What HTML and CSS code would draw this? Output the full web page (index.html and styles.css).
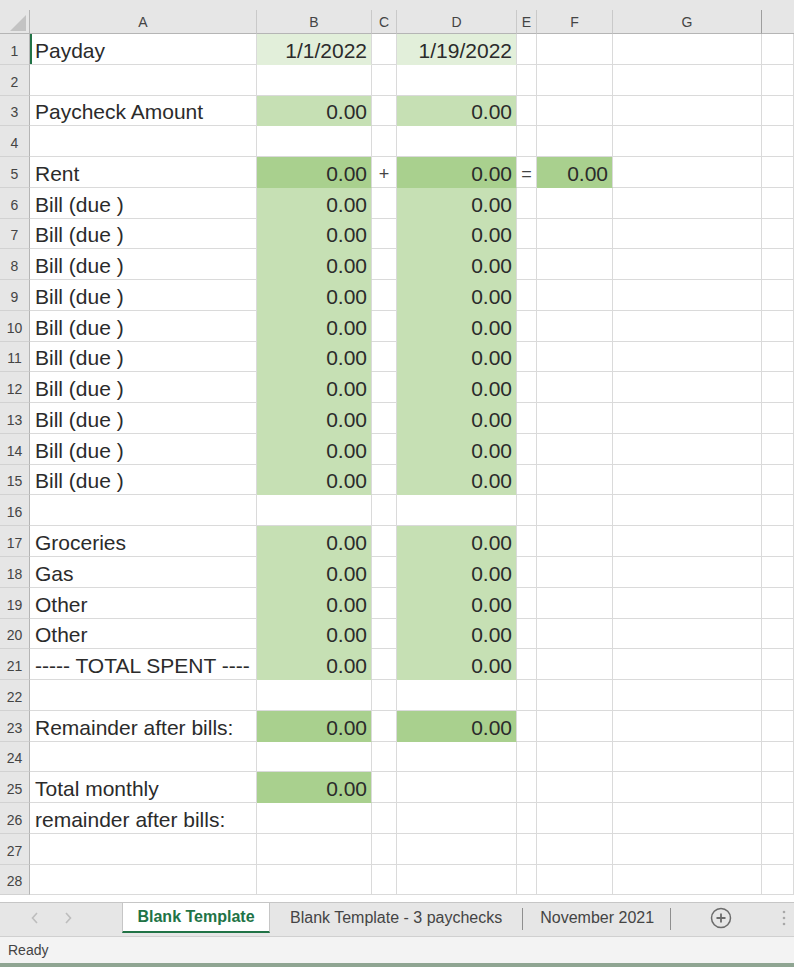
FILE: index.html
```html
<!DOCTYPE html>
<html lang="en">
<head>
  <meta charset="UTF-8" />
  <meta name="viewport" content="width=device-width, initial-scale=1.0"/>
  <title>Budget - Blank Template</title>
  <link rel="stylesheet" href="styles.css">
</head>
<body>
  <div class="sheet">
    <div class="top-strip"></div>
    <table class="grid">
      <colgroup>
        <col class="col-hd"><col class="col-a"><col class="col-b"><col class="col-c"><col class="col-d">
        <col class="col-e"><col class="col-f"><col class="col-g"><col class="col-h">
      </colgroup>
      <thead>
        <tr>
          <th class="corner">
            <svg width="16" height="16" viewBox="0 0 16 16"><polygon points="0,16 16,16 16,0" fill="#c3c3c3"/></svg>
          </th>
          <th>A</th><th>B</th><th>C</th><th>D</th><th>E</th><th>F</th><th class="last">G</th><th></th>
        </tr>
      </thead>
      <tbody>
        <tr class="active-row"><th>1</th><td class="active">Payday</td><td class="num pale">1/1/2022</td><td></td><td class="num pale">1/19/2022</td><td></td><td></td><td></td><td></td></tr>
        <tr><th>2</th><td></td><td></td><td></td><td></td><td></td><td></td><td></td><td></td></tr>
        <tr><th>3</th><td>Paycheck Amount</td><td class="num light">0.00</td><td></td><td class="num light">0.00</td><td></td><td></td><td></td><td></td></tr>
        <tr><th>4</th><td></td><td></td><td></td><td></td><td></td><td></td><td></td><td></td></tr>
        <tr><th>5</th><td>Rent</td><td class="num dark">0.00</td><td class="op">+</td><td class="num dark">0.00</td><td class="op">=</td><td class="num dark">0.00</td><td></td><td></td></tr>
        <tr><th>6</th><td>Bill (due )</td><td class="num light">0.00</td><td></td><td class="num light">0.00</td><td></td><td></td><td></td><td></td></tr>
        <tr><th>7</th><td>Bill (due )</td><td class="num light">0.00</td><td></td><td class="num light">0.00</td><td></td><td></td><td></td><td></td></tr>
        <tr><th>8</th><td>Bill (due )</td><td class="num light">0.00</td><td></td><td class="num light">0.00</td><td></td><td></td><td></td><td></td></tr>
        <tr><th>9</th><td>Bill (due )</td><td class="num light">0.00</td><td></td><td class="num light">0.00</td><td></td><td></td><td></td><td></td></tr>
        <tr><th>10</th><td>Bill (due )</td><td class="num light">0.00</td><td></td><td class="num light">0.00</td><td></td><td></td><td></td><td></td></tr>
        <tr><th>11</th><td>Bill (due )</td><td class="num light">0.00</td><td></td><td class="num light">0.00</td><td></td><td></td><td></td><td></td></tr>
        <tr><th>12</th><td>Bill (due )</td><td class="num light">0.00</td><td></td><td class="num light">0.00</td><td></td><td></td><td></td><td></td></tr>
        <tr><th>13</th><td>Bill (due )</td><td class="num light">0.00</td><td></td><td class="num light">0.00</td><td></td><td></td><td></td><td></td></tr>
        <tr><th>14</th><td>Bill (due )</td><td class="num light">0.00</td><td></td><td class="num light">0.00</td><td></td><td></td><td></td><td></td></tr>
        <tr><th>15</th><td>Bill (due )</td><td class="num light">0.00</td><td></td><td class="num light">0.00</td><td></td><td></td><td></td><td></td></tr>
        <tr><th>16</th><td></td><td></td><td></td><td></td><td></td><td></td><td></td><td></td></tr>
        <tr><th>17</th><td>Groceries</td><td class="num light">0.00</td><td></td><td class="num light">0.00</td><td></td><td></td><td></td><td></td></tr>
        <tr><th>18</th><td>Gas</td><td class="num light">0.00</td><td></td><td class="num light">0.00</td><td></td><td></td><td></td><td></td></tr>
        <tr><th>19</th><td>Other</td><td class="num light">0.00</td><td></td><td class="num light">0.00</td><td></td><td></td><td></td><td></td></tr>
        <tr><th>20</th><td>Other</td><td class="num light">0.00</td><td></td><td class="num light">0.00</td><td></td><td></td><td></td><td></td></tr>
        <tr><th>21</th><td>----- TOTAL SPENT ----</td><td class="num light">0.00</td><td></td><td class="num light">0.00</td><td></td><td></td><td></td><td></td></tr>
        <tr><th>22</th><td></td><td></td><td></td><td></td><td></td><td></td><td></td><td></td></tr>
        <tr><th>23</th><td>Remainder after bills:</td><td class="num dark">0.00</td><td></td><td class="num dark">0.00</td><td></td><td></td><td></td><td></td></tr>
        <tr><th>24</th><td></td><td></td><td></td><td></td><td></td><td></td><td></td><td></td></tr>
        <tr><th>25</th><td>Total monthly</td><td class="num dark">0.00</td><td></td><td></td><td></td><td></td><td></td><td></td></tr>
        <tr><th>26</th><td>remainder after bills:</td><td></td><td></td><td></td><td></td><td></td><td></td><td></td></tr>
        <tr><th>27</th><td></td><td></td><td></td><td></td><td></td><td></td><td></td><td></td></tr>
        <tr><th>28</th><td></td><td></td><td></td><td></td><td></td><td></td><td></td><td></td></tr>
      </tbody>
    </table>
  </div>

  <div class="tabs">
    <div class="tab-nav">
      <svg width="8" height="12" viewBox="0 0 8 12"><path d="M6 1 L1.5 6 L6 11" fill="none" stroke="#bdbdbd" stroke-width="1.6"/></svg>
      <svg width="8" height="12" viewBox="0 0 8 12"><path d="M2 1 L6.5 6 L2 11" fill="none" stroke="#bdbdbd" stroke-width="1.6"/></svg>
    </div>
    <div class="tab current">Blank Template</div>
    <div class="tab tab-wide">Blank Template - 3 paychecks</div>
    <div class="sep"></div>
    <div class="tab tab-nov">November 2021</div>
    <div class="sep"></div>
    <div class="add-sheet">
      <svg width="22" height="22" viewBox="0 0 22 22">
        <circle cx="11" cy="11" r="9.5" fill="none" stroke="#6b6b6b" stroke-width="1.5"/>
        <path d="M11 6.5 V15.5 M6.5 11 H15.5" stroke="#6b6b6b" stroke-width="1.8"/>
      </svg>
    </div>
    <div class="more">
      <svg width="4" height="16" viewBox="0 0 4 16">
        <circle cx="2" cy="2" r="1.3" fill="#a8a8a8"/>
        <circle cx="2" cy="8" r="1.3" fill="#a8a8a8"/>
        <circle cx="2" cy="14" r="1.3" fill="#a8a8a8"/>
      </svg>
    </div>
  </div>

  <div class="status">Ready</div>
  <div class="status-edge"></div>
</body>
</html>
```

FILE: styles.css
```css
body {
  margin: 0;
  width: 794px;
  height: 967px;
  overflow: hidden;
  font-family: "Liberation Sans", Arial, sans-serif;
  background: #ffffff;
  display: flex;
  flex-direction: column;
}

.sheet {
  height: 902px;
  overflow: hidden;
  background: #ffffff;
}

.top-strip {
  height: 10px;
  background: #e6e6e6;
}

.grid {
  table-layout: fixed;
  width: 794px;
  border-collapse: separate;
  border-spacing: 0;
}

.col-hd { width: 30px; }
.col-a { width: 227px; }
.col-b { width: 115px; }
.col-c { width: 25px; }
.col-d { width: 120px; }
.col-e { width: 20px; }
.col-f { width: 76px; }
.col-g { width: 149px; }
.col-h { width: 32px; }

.grid th,
.grid td {
  box-sizing: border-box;
  padding: 0;
  overflow: hidden;
  white-space: nowrap;
}

/* column letters */
.grid thead th {
  height: 24px;
  background: #e6e6e6;
  color: #444;
  font-size: 14px;
  font-weight: normal;
  text-align: center;
  border-right: 1px solid #c9c9c9;
  border-bottom: 1px solid #b5b5b5;
}

.grid thead th.last {
  border-right-color: #9e9e9e;
}

.grid thead th:last-child {
  border-right: none;
}

.grid thead th.corner {
  text-align: right;
  vertical-align: bottom;
  padding: 0 3px 2px 0;
  border-right-color: #b5b5b5;
}

.corner svg {
  display: block;
  margin-left: auto;
}

/* row numbers */
.grid tbody th {
  height: 30.78px;
  background: #e6e6e6;
  color: #444;
  font-size: 14px;
  font-weight: normal;
  text-align: center;
  vertical-align: bottom;
  padding-bottom: 5px;
  border-right: 1px solid #b5b5b5;
  border-bottom: 1px solid #d2d2d2;
}

.active-row th {
  background: #d9d9d9;
}

.grid td {
  height: 30.78px;
  font-size: 21px;
  line-height: 24px;
  color: #2b2b2b;
  vertical-align: bottom;
  padding: 0 0 1px 5px;
  border-right: 1px solid #dadada;
  border-bottom: 1px solid #dadada;
}

.grid td.active {
  box-shadow: inset 2px 0 0 #217346;
}

.grid td.num {
  text-align: right;
  padding: 0 4px 1px 0;
}

.grid td.op {
  text-align: center;
  padding: 0 0 1px 0;
  font-size: 18px;
  color: #444;
}

.pale {
  background: #e2efda;
  border-bottom-color: #e2efda !important;
}

.light {
  background: #c6e0b4;
  border-bottom-color: #c6e0b4 !important;
}

.dark {
  background: #a9d08e;
  border-bottom-color: #a9d08e !important;
}

/* sheet tabs */
.tabs {
  height: 33px;
  background: #e6e6e6;
  border-top: 1px solid #c6c6c6;
  border-bottom: 1px solid #d0d0d0;
  display: flex;
  align-items: flex-start;
  font-size: 16px;
  color: #444;
}

.tab-nav {
  width: 122px;
  height: 30px;
  display: flex;
  align-items: center;
  gap: 25px;
  padding-left: 31px;
  box-sizing: border-box;
}

.tab {
  height: 30px;
  line-height: 30px;
  white-space: nowrap;
  box-sizing: border-box;
}

.tab.current {
  width: 148px;
  background: #ffffff;
  color: #217346;
  font-weight: bold;
  text-align: center;
  border-left: 1px solid #c6c6c6;
  border-right: 1px solid #c6c6c6;
  border-bottom: 2px solid #217346;
  line-height: 28px;
}

.tab-wide {
  padding: 0 20px 0 20px;
}

.tab-nov {
  padding: 0 16px 0 17px;
}

.sep {
  width: 1px;
  height: 22px;
  margin-top: 5px;
  background: #8f8f8f;
}

.add-sheet {
  width: 40px;
  height: 30px;
  margin-left: 30px;
  display: flex;
  align-items: center;
  justify-content: center;
}

.more {
  height: 30px;
  margin-left: 41px;
  display: flex;
  align-items: center;
}

.status {
  height: 26px;
  background: #f3f3f3;
  font-size: 14px;
  color: #444;
  padding-left: 8px;
  display: flex;
  align-items: center;
}

.status-edge {
  flex: 1;
  background: #8fa592;
}
```
